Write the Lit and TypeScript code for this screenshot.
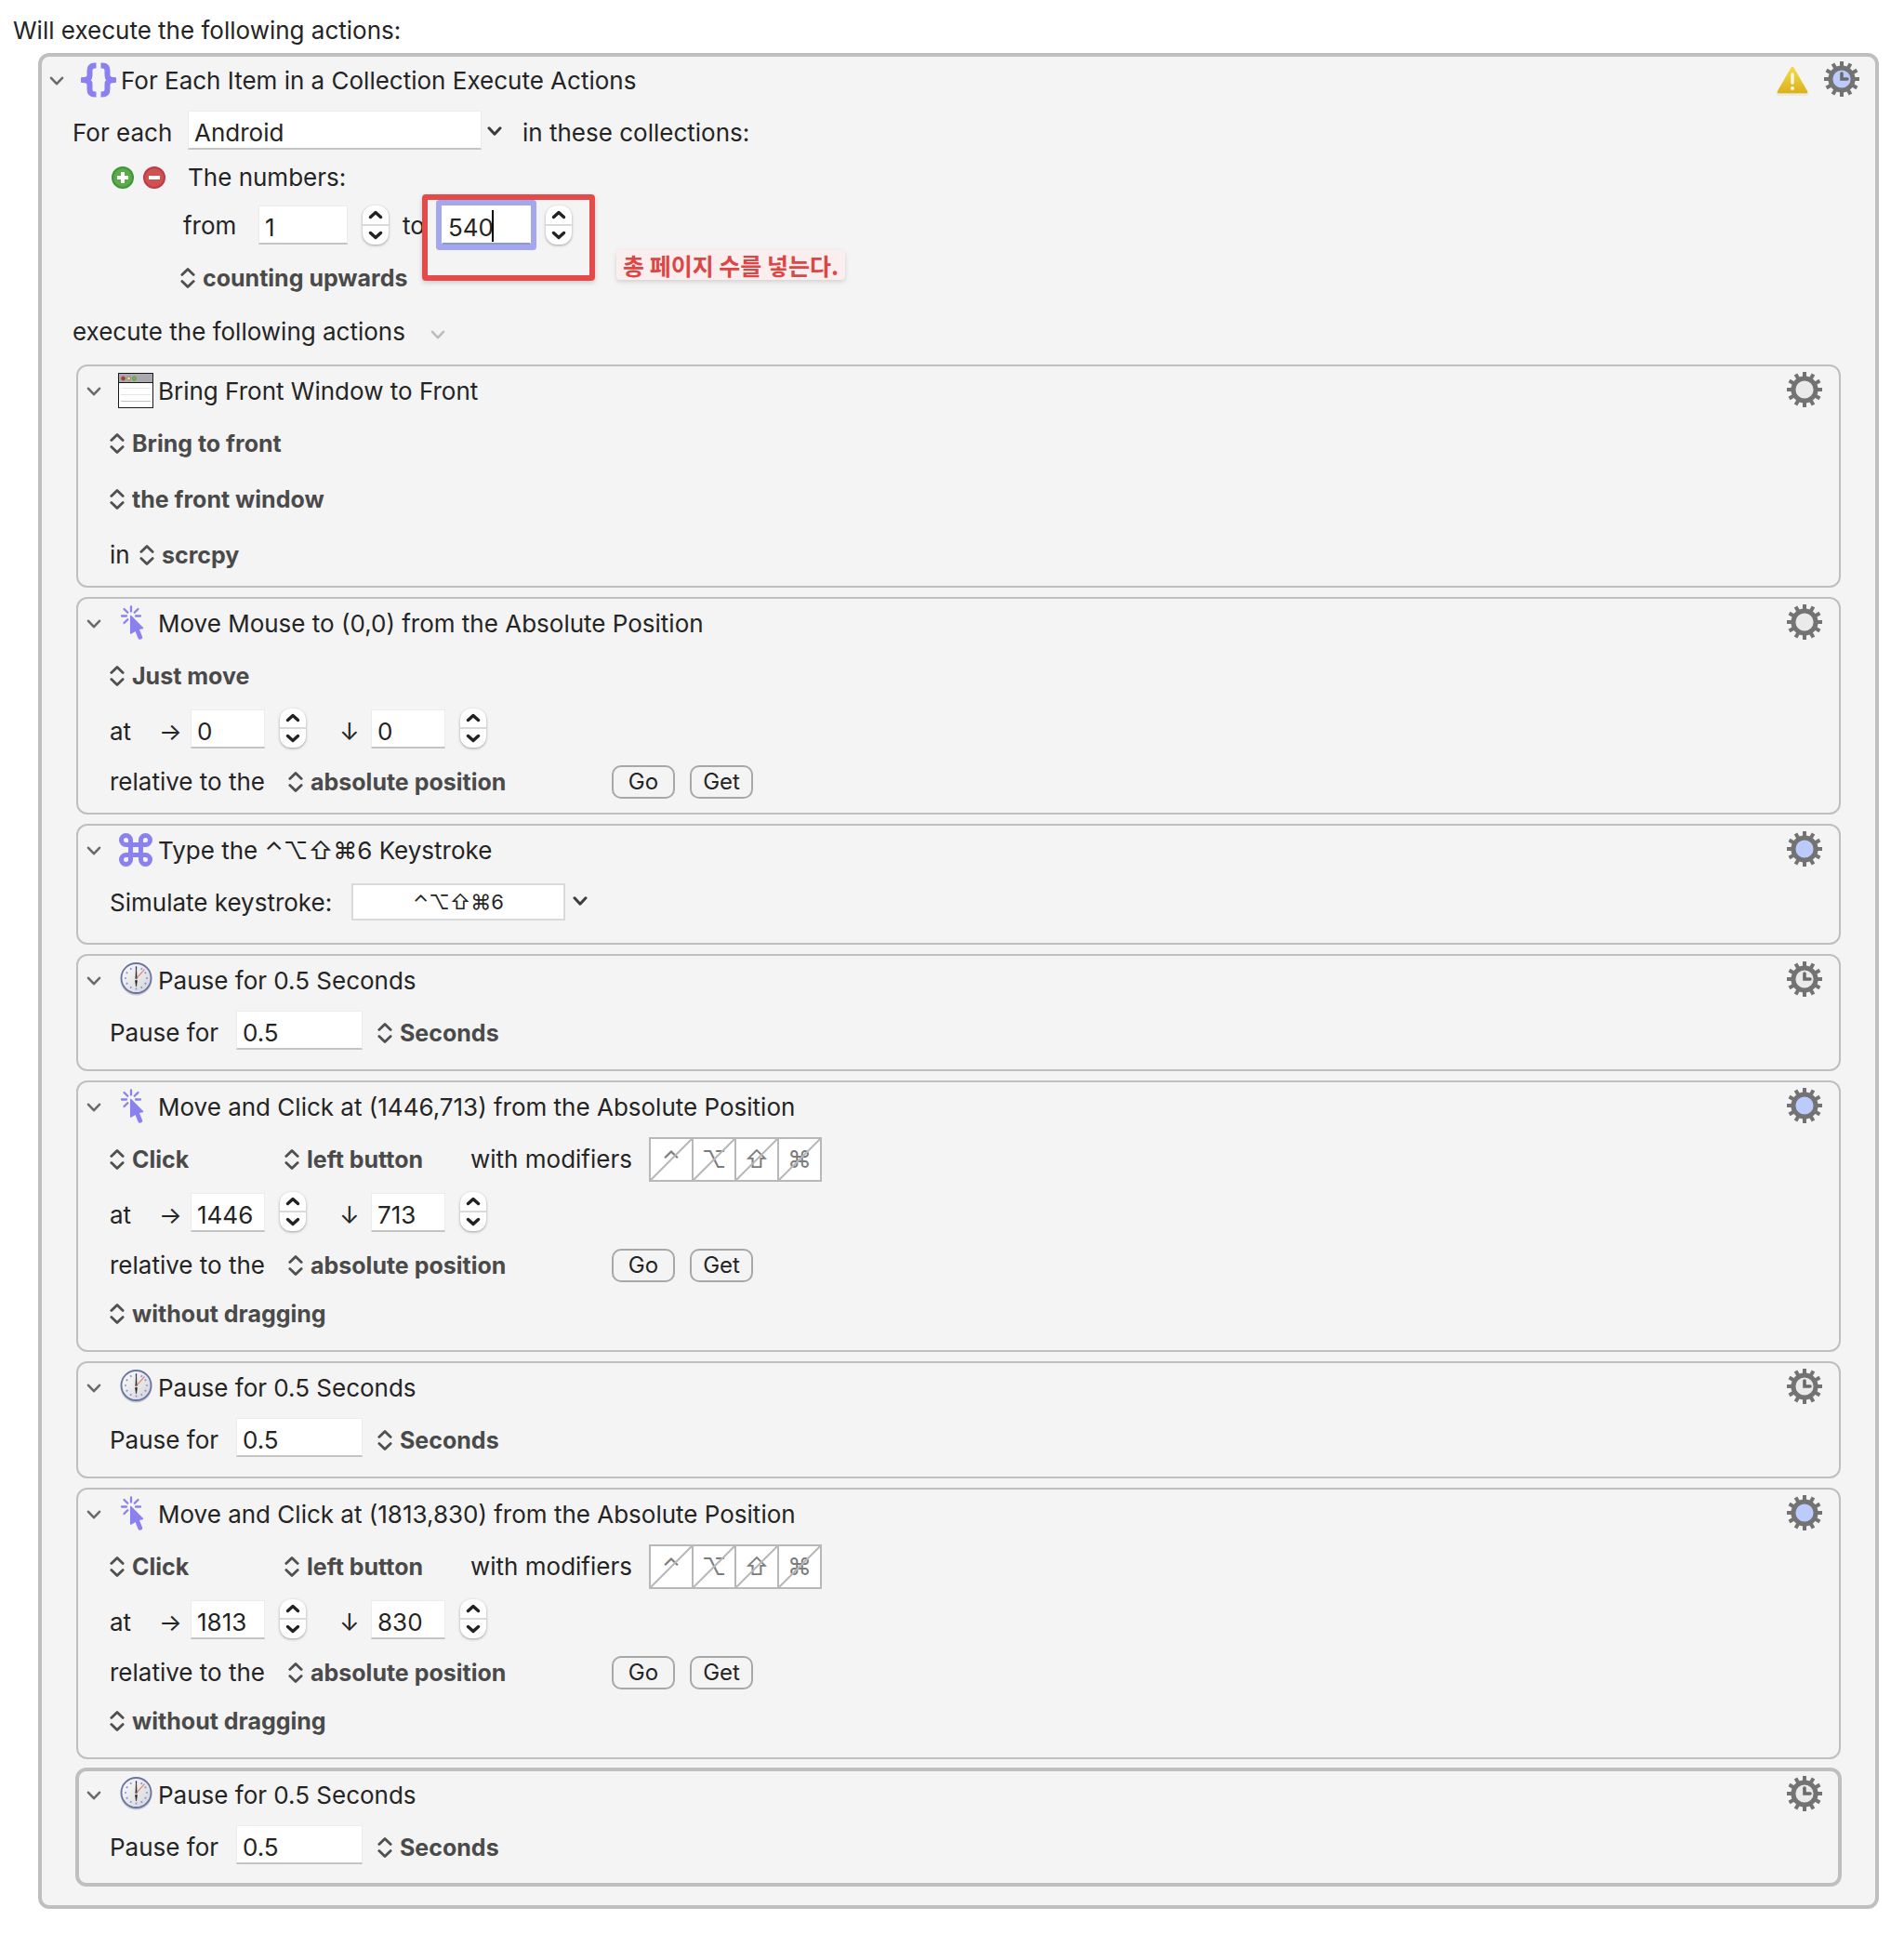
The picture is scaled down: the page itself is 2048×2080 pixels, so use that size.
import { LitElement, html, svg, css, nothing } from "lit";
import { customElement, property } from "lit/decorators.js";
import { classMap } from "lit/directives/class-map.js";

type IconName = "braces" | "window" | "pointer" | "command" | "clock";

interface Step {
  kind: "window" | "move" | "click" | "keystroke" | "pause";
  icon: IconName;
  title: string;
  tinted?: boolean;
  timed?: boolean;
  selected?: boolean;
  x?: string;
  y?: string;
}

const STEPS: Step[] = [
  { kind: "window", icon: "window", title: "Bring Front Window to Front" },
  { kind: "move", icon: "pointer", title: "Move Mouse to (0,0) from the Absolute Position", x: "0", y: "0" },
  { kind: "keystroke", icon: "command", title: "Type the ⌃⌥⇧⌘6 Keystroke", tinted: true },
  { kind: "pause", icon: "clock", title: "Pause for 0.5 Seconds", timed: true },
  { kind: "click", icon: "pointer", title: "Move and Click at (1446,713) from the Absolute Position", tinted: true, x: "1446", y: "713" },
  { kind: "pause", icon: "clock", title: "Pause for 0.5 Seconds", timed: true },
  { kind: "click", icon: "pointer", title: "Move and Click at (1813,830) from the Absolute Position", tinted: true, x: "1813", y: "830" },
  { kind: "pause", icon: "clock", title: "Pause for 0.5 Seconds", timed: true, selected: true },
];

const MODIFIERS: [string, string][] = [
  ["⌃", "Control"],
  ["⌥", "Option"],
  ["⇧", "Shift"],
  ["⌘", "Command"],
];

const spokes = (count: number, draw: (angle: number, index: number) => unknown) =>
  Array.from({ length: count }, (_, i) => draw((i * 360) / count, i));

const chevron = (cls = "") => html`
  <svg class="chevron ${cls}" viewBox="0 0 16 16" aria-hidden="true"><path d="M2 4.8 8 11.2 14 4.8" /></svg>
`;

const updown = html`
  <svg class="updown" viewBox="0 0 16 24" aria-hidden="true">
    <path d="M1.8 8.4 8 2.4 14.2 8.4M1.8 15.6 8 21.6 14.2 15.6" />
  </svg>
`;

const gear = (tinted = false, timed = false) => html`
  <button class="plain gear" aria-label="Action options">
    <svg viewBox="-19 -19 38 38" aria-hidden="true">
      <circle r="12.1" fill=${tinted ? "#bccbfd" : "#eaeaea"} stroke="#737373" stroke-width="5" />
      ${spokes(12, (a) => svg`<path d="M0-13V-19" transform="rotate(${a})" stroke="#737373" stroke-width="4" />`)}
      ${timed ? svg`<path d="M0-6V0H6" fill="none" stroke="#6a6a6a" stroke-width="3.6" stroke-linecap="round" />` : nothing}
    </svg>
  </button>
`;

const warning = html`
  <svg class="warning" viewBox="0 0 36 34" role="img" aria-label="Warning">
    <defs>
      <linearGradient id="amber" x1="0" y1="0" x2="0" y2="1">
        <stop offset="0" stop-color="#f3da4b" />
        <stop offset="1" stop-color="#dcb31f" />
      </linearGradient>
    </defs>
    <path d="M18 3.5 33 30H3Z" fill="#ccc" stroke="#ccc" stroke-width="5" stroke-linejoin="round" opacity=".5" />
    <path d="M18 3 33 29H3Z" fill="#fff" stroke="#fbf8ef" stroke-width="5" stroke-linejoin="round" />
    <path d="M18 3 33 29H3Z" fill="url(#amber)" stroke="url(#amber)" stroke-width="3" stroke-linejoin="round" />
    <path d="M18 10V19" stroke="#fdf8e4" stroke-width="3.4" stroke-linecap="round" />
    <circle cx="18" cy="25" r="2" fill="#fdf8e4" />
  </svg>
`;

const icons: Record<IconName, unknown> = {
  braces: html`
    <svg viewBox="0 0 38 38" aria-hidden="true">
      <path
        d="M16.5 3.5H15Q9.500 3.5 9.500 9V14Q9.500 19 2 19Q9.500 19 9.500 24V29Q9.500 34.500 15 34.500H16.500M21.500 3.5H23Q28.500 3.500 28.500 9V14Q28.500 19 36 19Q28.500 19 28.500 24V29Q28.500 34.500 23 34.500H21.500"
        fill="none" stroke="#8b80f0" stroke-width="6" stroke-linejoin="round"
      />
    </svg>
  `,
  window: html`
    <svg viewBox="0 0 38 38" aria-hidden="true">
      <rect x=".5" y=".5" width="37" height="37" fill="#fff" stroke="#1a1a1a" />
      <rect x="1" y="1" width="36" height="9" fill="#aaa9ad" />
      <path d="M1 10.5H37" stroke="#1a1a1a" />
      <circle cx="5.5" cy="6" r="2" fill="#c0342f" stroke="#8a4a45" stroke-width=".8" />
      <circle cx="11.5" cy="6" r="2" fill="#f0dc9c" stroke="#8a7a45" stroke-width=".8" />
      <circle cx="17.5" cy="6" r="2" fill="#74bd45" stroke="#548a45" stroke-width=".8" />
      <path d="M3 16.5H35M3 23.5H35" stroke="#e6e6e6" />
      <path d="M3 30.5H35" stroke="#c4c4c4" />
    </svg>
  `,
  pointer: html`
    <svg viewBox="0 0 38 38" aria-hidden="true">
      <g stroke="#8b80f0" stroke-width="2.3" stroke-linecap="round">
        <path d="M14 1.5V6.500M4 11.500H9M19 11.500H24M6.500 4 10.300 7.800M21.500 4 17.700 7.800M6.500 19 10.300 15.200" />
      </g>
      <path d="M13.700 11.500 26.500 24.500 21.500 25.500 18 27.500 13.700 30Z" fill="#8b80f0" stroke="#8b80f0" stroke-width="1.500" stroke-linejoin="round" />
      <path d="M20 25 23.700 34.300" stroke="#8b80f0" stroke-width="4.800" stroke-linecap="round" />
    </svg>
  `,
  command: html`
    <svg viewBox="0 0 38 38" aria-hidden="true">
      <path
        d="M13.5 13.5V8.500A5 5 0 1 0 8.500 13.500H29.500A5 5 0 1 0 24.500 8.500V29.500A5 5 0 1 0 29.500 24.500H8.500A5 5 0 1 0 13.500 29.500Z"
        fill="none" stroke="#8b80f0" stroke-width="5"
      />
    </svg>
  `,
  clock: html`
    <svg viewBox="0 0 38 38" aria-hidden="true">
      <defs>
        <linearGradient id="face" x1="0" y1="0" x2="1" y2="1">
          <stop offset="0" stop-color="#fdfdfd" />
          <stop offset="1" stop-color="#d3d3d6" />
        </linearGradient>
      </defs>
      <circle cx="19.5" cy="18.5" r="17" fill="#c6c8d4" />
      <circle cx="19.5" cy="17" r="16" fill="url(#face)" stroke="#6874a0" stroke-width="1.8" />
      ${spokes(12, (a) => svg`<path d="M19.5 4.5V6.500" transform="rotate(${a} 19.5 17)" stroke="#8494e4" stroke-width="1.700" />`)}
      <path d="M20 17 28.500 7.500" stroke="#e88a78" stroke-width="1.200" />
      <path d="M18.900 17 19.500 4.500 20.100 17ZM18.500 19.500H20.500L19.500 26Z" fill="#222" stroke="#222" stroke-width=".6" />
      <circle cx="19.5" cy="17" r="1.200" fill="#666" />
    </svg>
  `,
};

const disclosure = html`<button class="plain disclosure" aria-label="Collapse action" aria-expanded="true">${chevron()}</button>`;

const popup = (text: string, label: string, cls = "") => html`
  <label class="popup ${cls}">
    ${updown}
    <select aria-label=${label}><option>${text}</option></select>
  </label>
`;

const stepper = (label: string) => html`
  <span class="stepper" role="group" aria-label=${label}>
    <button class="plain" aria-label="Increase">
      <svg viewBox="0 0 16 10" aria-hidden="true"><path d="M2.5 7.5 8 2.5 13.5 7.5" /></svg>
    </button>
    <button class="plain" aria-label="Decrease">
      <svg viewBox="0 0 16 10" aria-hidden="true"><path d="M2.5 2.5 8 7.5 13.5 2.5" /></svg>
    </button>
  </span>
`;

const shared = css`
  :host {
    display: block;
    color: #242424;
    font: 26px/32px Inter, "Noto Sans CJK KR", sans-serif;
  }
  * {
    box-sizing: border-box;
  }
  svg {
    display: block;
    flex: none;
  }
  button,
  input,
  select {
    font: inherit;
    color: inherit;
    margin: 0;
  }
  .plain {
    display: block;
    padding: 0;
    border: 0;
    background: none;
  }
  .chevron {
    width: 16px;
    height: 16px;
    fill: none;
    stroke: #6b6b6b;
    stroke-width: 2.6;
    stroke-linecap: round;
    stroke-linejoin: round;
  }
  .chevron.dark {
    margin-bottom: 4px;
    stroke: #3c3c3c;
    stroke-width: 3;
  }
  .chevron.faint {
    stroke: #bdbdbd;
  }
  .updown {
    width: 16px;
    height: 24px;
    fill: none;
    stroke: #4f4f4f;
    stroke-width: 2.8;
    stroke-linecap: round;
    stroke-linejoin: round;
  }
  .head {
    display: flex;
    align-items: center;
    height: 53px;
  }
  .disclosure {
    width: 16px;
    margin-right: 18px;
  }
  .icon {
    margin-bottom: 1px;
  }
  .icon svg {
    width: 38px;
    height: 38px;
  }
  .title {
    flex: 1;
    margin: 0 0 0 5px;
    font: inherit;
    white-space: nowrap;
  }
  .gear {
    margin: 0 18px 3px 0;
  }
  .gear svg {
    width: 38px;
    height: 38px;
  }
  .row {
    display: flex;
    align-items: center;
    height: 60px;
    white-space: nowrap;
  }
  .popup {
    display: inline-flex;
    align-items: center;
    gap: 8px;
  }
  select {
    appearance: none;
    padding: 0;
    border: 0;
    background: none;
    color: #4a4a4a;
    font-size: 25px;
    font-weight: 700;
  }
  .field {
    height: 42px;
    margin-bottom: 6px;
    padding: 5px 6px 0;
    border: 1px solid #ececec;
    border-bottom: 2px solid #c4c4c4;
    border-radius: 0;
    background: #fff;
    outline: 0;
  }
  .stepper {
    display: inline-flex;
    flex-direction: column;
    flex: none;
    width: 28px;
    height: 42px;
    margin: 0 0 8px 16px;
    border-radius: 12px;
    background: #fff;
    box-shadow: 0 1px 3px rgb(0 0 0 / 35%);
  }
  .stepper button {
    flex: 1;
    display: grid;
    place-items: center;
  }
  .stepper button + button {
    border-top: 2px solid #dadada;
  }
  .stepper svg {
    width: 16px;
    height: 10px;
    fill: none;
    stroke: #222;
    stroke-width: 3.4;
    stroke-linecap: round;
    stroke-linejoin: round;
  }
`;

@customElement("macro-step")
export class MacroStep extends LitElement {
  @property({ attribute: false }) step!: Step;

  static styles = [
    shared,
    css`
      .card {
        border: 2px solid #bfbfbf;
        border-radius: 12px;
      }
      .card.selected {
        margin: -1px;
        border-width: 4px;
      }
      .selected .head {
        margin: -1px -1px 0;
      }
      .selected .body {
        margin: 0 -1px -1px;
      }
      .head {
        padding-left: 9px;
      }
      .body {
        padding: 0 34px 9px;
      }
      .window .body {
        padding-bottom: 3px;
      }
      .keystroke .body {
        padding-bottom: 13px;
      }
      .click .body {
        padding-bottom: 11px;
      }
      .row.tight {
        height: 48px;
      }
      .row.last {
        height: 56px;
      }
      .in {
        width: 32px;
      }
      .at {
        width: 53px;
      }
      .axis {
        width: 34px;
      }
      .coordinate {
        width: 80px;
      }
      .stepper + .axis {
        margin-left: 36px;
      }
      .relative {
        width: 192px;
      }
      .origin {
        width: 348px;
      }
      .verb {
        width: 188px;
      }
      .mouse {
        width: 200px;
      }
      .with {
        width: 192px;
      }
      .simulate {
        width: 260px;
      }
      .pause-for {
        width: 136px;
      }
      .seconds {
        width: 136px;
        margin-right: 16px;
      }
      .push {
        width: 68px;
        height: 36px;
        margin-right: 16px;
        padding: 0;
        border: 2px solid #a8a8a8;
        border-radius: 10px;
        background: none;
        font-size: 24px;
        line-height: 32px;
      }
      .shortcut {
        width: 230px;
        height: 40px;
        margin: 0 8px 2px 0;
        padding: 0;
        border: 2px solid #dadada;
        border-radius: 0;
        background: #fff;
        outline: 0;
        text-align: center;
        font-size: 22px;
      }
      .modifiers {
        display: flex;
        border: 2px solid #b8b8b8;
        background: #b8b8b8;
        gap: 2px;
      }
      .modifiers button {
        display: grid;
        width: 44px;
        height: 44px;
        background: #fff;
        color: #7c7c7c;
      }
      .modifiers button > * {
        grid-area: 1 / 1;
        place-self: center;
      }
      .strike {
        width: 44px;
        height: 44px;
        stroke: #b8b8b8;
        stroke-width: 2;
      }
    `,
  ];

  private position(step: Step) {
    return html`
      <div class="row">
        <span class="at">at</span>
        <span class="axis">→</span>
        <input class="field coordinate" aria-label="Horizontal position" .value=${step.x ?? ""} />
        ${stepper("Horizontal position")}
        <span class="axis">↓</span>
        <input class="field coordinate" aria-label="Vertical position" .value=${step.y ?? ""} />
        ${stepper("Vertical position")}
      </div>
      <div class="row tight">
        <span class="relative">relative to the</span>
        ${popup("absolute position", "Relative to", "origin")}
        <button class="push">Go</button>
        <button class="push">Get</button>
      </div>
    `;
  }

  private body(step: Step) {
    switch (step.kind) {
      case "window":
        return html`
          <div class="row">${popup("Bring to front", "Window action")}</div>
          <div class="row">${popup("the front window", "Window")}</div>
          <div class="row"><span class="in">in</span>${popup("scrcpy", "Application")}</div>
        `;
      case "move":
        return html`
          <div class="row">${popup("Just move", "Mouse action")}</div>
          ${this.position(step)}
        `;
      case "keystroke":
        return html`
          <div class="row">
            <label class="simulate" for="shortcut">Simulate keystroke:</label>
            <input id="shortcut" class="shortcut" .value=${"⌃⌥⇧⌘6"} />
            <button class="plain" aria-label="Choose keystroke">${chevron("dark")}</button>
          </div>
        `;
      case "pause":
        return html`
          <div class="row">
            <label class="pause-for" for="seconds">Pause for</label>
            <input id="seconds" class="field seconds" .value=${"0.5"} />
            ${popup("Seconds", "Unit")}
          </div>
        `;
      case "click":
        return html`
          <div class="row">
            ${popup("Click", "Mouse action", "verb")} ${popup("left button", "Mouse button", "mouse")}
            <span class="with">with modifiers</span>
            <div class="modifiers">
              ${MODIFIERS.map(
                ([glyph, name]) => html`
                  <button class="plain" aria-label=${name} aria-pressed="false">
                    <span>${glyph}</span>
                    <svg class="strike" viewBox="0 0 44 44" aria-hidden="true"><path d="M0 44 44 0" /></svg>
                  </button>
                `,
              )}
            </div>
          </div>
          ${this.position(step)}
          <div class="row last">${popup("without dragging", "Dragging")}</div>
        `;
    }
  }

  render() {
    const { step } = this;
    return html`
      <article class=${classMap({ card: true, [step.kind]: true, selected: !!step.selected })}>
        <header class="head">
          ${disclosure}
          <span class="icon">${icons[step.icon]}</span>
          <h3 class="title">${step.title}</h3>
          ${gear(step.tinted, step.timed)}
        </header>
        <div class="body">${this.body(step)}</div>
      </article>
    `;
  }
}

@customElement("app-root")
export class AppRoot extends LitElement {
  static styles = [
    shared,
    css`
      :host {
        min-height: 100vh;
        padding: 17px 27px 27px 41px;
        background: #fff;
      }
      .lead {
        margin: 0 0 8px -27px;
        font: inherit;
      }
      .loop {
        padding-bottom: 21px;
        border: 4px solid #bfbfbf;
        border-radius: 12px;
        background: #f4f4f4;
      }
      .head {
        height: 52px;
        padding-left: 8px;
      }
      .icon {
        margin-bottom: 2px;
      }
      .gear {
        margin: 0 17px 4px 0;
      }
      .warning {
        width: 36px;
        height: 34px;
        margin-right: 16px;
      }
      .settings {
        padding-left: 33px;
      }
      .for-each {
        width: 124px;
      }
      .variable {
        width: 316px;
        margin-right: 6px;
      }
      .suffix {
        margin-left: 22px;
      }
      .row.numbers {
        height: 36px;
        padding-left: 42px;
      }
      .round {
        margin-right: 10px;
      }
      .round svg {
        width: 24px;
        height: 24px;
      }
      .numbers span {
        margin-left: 14px;
      }
      .row.range {
        height: 68px;
        padding-left: 119px;
      }
      .from {
        width: 81px;
      }
      .number {
        width: 96px;
      }
      .range .number,
      .range .stepper {
        margin-bottom: 2px;
      }
      .to {
        width: 42px;
        margin-left: 15px;
      }
      .end {
        position: relative;
        display: flex;
        align-items: center;
      }
      .end .field {
        border-color: #fff #fff #9095dc;
        box-shadow: 0 0 0 6px #a3a7ee;
        border-radius: 1px;
      }
      .caret {
        position: absolute;
        left: 54px;
        top: 5px;
        width: 2px;
        height: 34px;
        background: #000;
      }
      .highlight {
        position: absolute;
        left: -21px;
        top: -12px;
        width: 186px;
        height: 93px;
        border: 6px solid #e34b4a;
        border-radius: 4px;
        box-shadow: 0 2px 5px rgb(0 0 0 / 18%);
        pointer-events: none;
      }
      .note {
        position: absolute;
        left: 188px;
        top: 48px;
        padding: 0 7px;
        border-radius: 4px;
        background: #fbeeef;
        box-shadow: 0 2px 5px rgb(0 0 0 / 15%);
        color: #dd4644;
        font: 700 25px/32px "Noto Sans CJK KR", sans-serif;
      }
      .row.direction {
        height: 44px;
        padding-left: 116px;
      }
      .row.execute {
        height: 71px;
      }
      .execute .chevron {
        margin: 6px 0 0 27px;
      }
      .steps {
        display: grid;
        gap: 10px;
        margin: 0 37px;
      }
    `,
  ];

  private roundButton(label: string, rim: string, fill: string, glyph: string) {
    return html`
      <button class="plain round" aria-label=${label}>
        <svg viewBox="0 0 24 24" aria-hidden="true">
          <circle cx="12" cy="12" r="11" fill=${fill} stroke=${rim} stroke-width="2" />
          <path d=${glyph} stroke="#fff" stroke-width="4" />
        </svg>
      </button>
    `;
  }

  render() {
    return html`
      <h1 class="lead">Will execute the following actions:</h1>
      <section class="loop">
        <header class="head">
          ${disclosure}
          <span class="icon">${icons.braces}</span>
          <h2 class="title">For Each Item in a Collection Execute Actions</h2>
          ${warning} ${gear(true, true)}
        </header>
        <div class="settings">
          <div class="row">
            <label class="for-each" for="variable">For each</label>
            <input id="variable" class="field variable" .value=${"Android"} />
            <button class="plain" aria-label="Choose variable">${chevron("dark")}</button>
            <span class="suffix">in these collections:</span>
          </div>
          <div class="row numbers">
            ${this.roundButton("Add collection", "#3f9440", "#5cab47", "M12 6V18M6 12H18")}
            ${this.roundButton("Remove collection", "#bf3a48", "#cf5150", "M6 12H18")}
            <span>The numbers:</span>
          </div>
          <div class="row range">
            <label class="from" for="from">from</label>
            <input id="from" class="field number" .value=${"1"} />
            ${stepper("From")}
            <label class="to" for="to">to</label>
            <div class="end">
              <input id="to" class="field number" .value=${"540"} />
              <span class="caret"></span>
              ${stepper("To")}
              <span class="highlight"></span>
              <span class="note">총 페이지 수를 넣는다.</span>
            </div>
          </div>
          <div class="row direction">${popup("counting upwards", "Direction")}</div>
          <div class="row execute">execute the following actions ${chevron("faint")}</div>
        </div>
        <div class="steps">${STEPS.map((step) => html`<macro-step .step=${step}></macro-step>`)}</div>
      </section>
    `;
  }
}
